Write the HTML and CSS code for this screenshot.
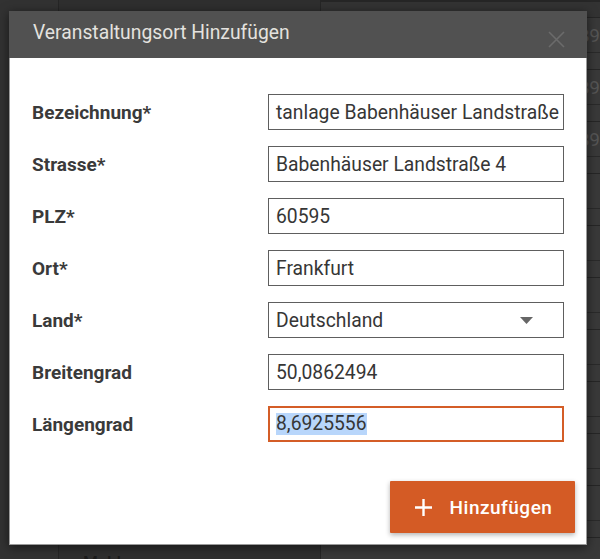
FILE: index.html
```html
<!DOCTYPE html>
<html lang="de">
<head>
<meta charset="utf-8">
<title>Veranstaltungsort Hinzufügen</title>
<link rel="stylesheet" href="styles.css">
</head>
<body>
<div class="page">
  <div class="col col-a"></div>
  <div class="col col-b"><div class="bg-note">Meldungen</div></div>
  <div class="col col-c">
    <div class="bg-top"></div>
    <div class="bg-row"><div class="bg-cell">89</div></div>
    <div class="bg-row"><div class="bg-cell">89</div></div>
    <div class="bg-row"><div class="bg-cell">89</div></div>
    <div class="bg-row"><div class="bg-cell"></div></div>
    <div class="bg-row"><div class="bg-cell"></div></div>
    <div class="bg-row"><div class="bg-cell"></div></div>
    <div class="bg-row"><div class="bg-cell"></div></div>
    <div class="bg-row"><div class="bg-cell"></div></div>
    <div class="bg-row"><div class="bg-cell"></div></div>
    <div class="bg-row"><div class="bg-cell"></div></div>
    <div class="bg-row"><div class="bg-cell"></div></div>
  </div>
</div>

<div class="dialog">
  <div class="dialog-header">
    <span class="dialog-title">Veranstaltungsort Hinzufügen</span>
    <svg class="close" width="17" height="17" viewBox="0 0 17 17"><path d="M1 1 L16 16 M16 1 L1 16" stroke="#6b6b6b" stroke-width="1.6" fill="none"/></svg>
  </div>
  <div class="dialog-body">
    <div class="form">
      <div class="label">Bezeichnung*</div>
      <div class="field">tanlage Babenhäuser Landstraße</div>
      <div class="label">Strasse*</div>
      <div class="field">Babenhäuser Landstraße 4</div>
      <div class="label">PLZ*</div>
      <div class="field">60595</div>
      <div class="label">Ort*</div>
      <div class="field">Frankfurt</div>
      <div class="label">Land*</div>
      <div class="field select"><span>Deutschland</span><svg width="13" height="7" viewBox="0 0 13 7"><path d="M0 0 L13 0 L6.5 7 Z" fill="#666"/></svg></div>
      <div class="label">Breitengrad</div>
      <div class="field">50,0862494</div>
      <div class="label">Längengrad</div>
      <div class="field focused"><span class="sel">8,6925556</span></div>
    </div>
    <div class="footer">
      <button class="btn"><svg width="17" height="17" viewBox="0 0 17 17"><path d="M8.5 0 V17 M0 8.5 H17" stroke="#fff" stroke-width="2.4"/></svg><span>Hinzufügen</span></button>
    </div>
  </div>
</div>
</body>
</html>
```

FILE: styles.css
```css
* { box-sizing: border-box; }
html, body { margin: 0; padding: 0; }
body {
  width: 600px;
  height: 559px;
  overflow: hidden;
  background: #2f2f2f;
  font-family: Roboto, "Liberation Sans", sans-serif;
  position: relative;
}
.page {
  display: grid;
  grid-template-columns: 58px 262px 1fr;
  height: 559px;
}
.col-a { background: #323232; }
.col-b {
  border-left: 1px solid #262626;
  background: #2f2f2f;
  display: flex;
  flex-direction: column;
  justify-content: flex-end;
  padding-left: 24px;
}
.bg-note {
  color: #1c1c1c;
  font-size: 17px;
  font-weight: 500;
  height: 8px;
  line-height: 22px;
  overflow: visible;
}
.col-c {
  border-left: 1px solid #262626;
  background: #393939;
  overflow: hidden;
}
.bg-top {
  height: 17px;
  border-top: 2px solid #262626;
  background: #333;
}
.bg-row {
  height: 52px;
  border-top: 1px solid #262626;
}
.bg-cell {
  height: 35px;
  border-bottom: 1px solid #2a2a2a;
  text-align: right;
  padding-right: 0;
  white-space: nowrap;
  color: #555;
  font-size: 19px;
  line-height: 35px;
}
.dialog {
  position: absolute;
  left: 9px;
  top: 11px;
  width: 578px;
  box-shadow: 0 2px 10px rgba(0,0,0,0.55);
}
.dialog-header {
  height: 47px;
  background: #515151;
  display: flex;
  align-items: center;
  justify-content: space-between;
  padding: 0 22px 0 24px;
}
.dialog-title {
  color: #e4e2df;
  font-size: 19.3px;
  margin-top: -5px;
}
.close { margin-top: 10px; }
.dialog-body {
  background: #fff;
  border: 1px solid #9a9a9a;
  border-top: 0;
  height: 487px;
  padding: 36px 11px 11px 22px;
  display: flex;
  flex-direction: column;
}
.form {
  display: grid;
  grid-template-columns: 1fr 296px;
  row-gap: 16px;
  align-items: center;
  margin-right: 11px;
}
.label {
  font-weight: 700;
  font-size: 19px;
  color: #3a3a3a;
}
.field {
  height: 36px;
  border: 1px solid #5e5e5e;
  padding: 0 7px;
  font-size: 19.3px;
  color: #363636;
  display: flex;
  align-items: center;
  white-space: nowrap;
  overflow: hidden;
}
.select { justify-content: space-between; padding-right: 30px; }
.focused { border: 2px solid #d45d27; padding: 0 6px; }
.sel { background: #b8d6fb; line-height: 22px; }
.footer {
  margin-top: auto;
  display: flex;
  justify-content: flex-end;
}
.btn {
  width: 185px;
  height: 52px;
  background: #d45b25;
  border: 0;
  border-radius: 1px;
  color: #fff;
  font-family: Roboto, "Liberation Sans", sans-serif;
  font-size: 19px;
  font-weight: 500;
  letter-spacing: 0.5px;
  display: flex;
  align-items: center;
  justify-content: center;
  gap: 18px;
  box-shadow: 0 2px 5px rgba(0,0,0,0.3);
  padding: 0 0 0 2px;
}
```
